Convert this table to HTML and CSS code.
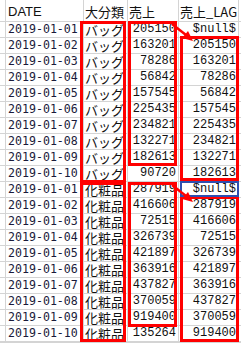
FILE: index.html
```html
<!DOCTYPE html>
<html>
<head>
<meta charset="utf-8">
<link rel="stylesheet" href="styles.css">
</head>
<body>
<div class="sheet">
  <div class="grid">
    <div class="c"></div><div class="c hd">DATE</div><div class="c hd jp">大分類</div><div class="c hd jp">売上</div><div class="c hd jp">売上_LAG</div><div class="c"></div>

    <div class="c"></div><div class="c dt">2019-01-01</div><div class="c cat">バッグ</div><div class="c num">205150</div><div class="c num">$null$</div><div class="c"></div>
    <div class="c"></div><div class="c dt">2019-01-02</div><div class="c cat">バッグ</div><div class="c num">163201</div><div class="c num">205150</div><div class="c"></div>
    <div class="c"></div><div class="c dt">2019-01-03</div><div class="c cat">バッグ</div><div class="c num">78286</div><div class="c num">163201</div><div class="c"></div>
    <div class="c"></div><div class="c dt">2019-01-04</div><div class="c cat">バッグ</div><div class="c num">56842</div><div class="c num">78286</div><div class="c"></div>
    <div class="c"></div><div class="c dt">2019-01-05</div><div class="c cat">バッグ</div><div class="c num">157545</div><div class="c num">56842</div><div class="c"></div>
    <div class="c"></div><div class="c dt">2019-01-06</div><div class="c cat">バッグ</div><div class="c num">225435</div><div class="c num">157545</div><div class="c"></div>
    <div class="c"></div><div class="c dt">2019-01-07</div><div class="c cat">バッグ</div><div class="c num">234821</div><div class="c num">225435</div><div class="c"></div>
    <div class="c"></div><div class="c dt">2019-01-08</div><div class="c cat">バッグ</div><div class="c num">132271</div><div class="c num">234821</div><div class="c"></div>
    <div class="c"></div><div class="c dt">2019-01-09</div><div class="c cat">バッグ</div><div class="c num">182613</div><div class="c num">132271</div><div class="c"></div>
    <div class="c"></div><div class="c dt">2019-01-10</div><div class="c cat">バッグ</div><div class="c num">90720</div><div class="c num">182613</div><div class="c"></div>

    <div class="c"></div><div class="c dt">2019-01-01</div><div class="c cat">化粧品</div><div class="c num">287919</div><div class="c num">$null$</div><div class="c"></div>
    <div class="c"></div><div class="c dt">2019-01-02</div><div class="c cat">化粧品</div><div class="c num">416606</div><div class="c num">287919</div><div class="c"></div>
    <div class="c"></div><div class="c dt">2019-01-03</div><div class="c cat">化粧品</div><div class="c num">72515</div><div class="c num">416606</div><div class="c"></div>
    <div class="c"></div><div class="c dt">2019-01-04</div><div class="c cat">化粧品</div><div class="c num">326739</div><div class="c num">72515</div><div class="c"></div>
    <div class="c"></div><div class="c dt">2019-01-05</div><div class="c cat">化粧品</div><div class="c num">421897</div><div class="c num">326739</div><div class="c"></div>
    <div class="c"></div><div class="c dt">2019-01-06</div><div class="c cat">化粧品</div><div class="c num">363916</div><div class="c num">421897</div><div class="c"></div>
    <div class="c"></div><div class="c dt">2019-01-07</div><div class="c cat">化粧品</div><div class="c num">437827</div><div class="c num">363916</div><div class="c"></div>
    <div class="c"></div><div class="c dt">2019-01-08</div><div class="c cat">化粧品</div><div class="c num">370059</div><div class="c num">437827</div><div class="c"></div>
    <div class="c"></div><div class="c dt">2019-01-09</div><div class="c cat">化粧品</div><div class="c num">919400</div><div class="c num">370059</div><div class="c"></div>
    <div class="c"></div><div class="c dt">2019-01-10</div><div class="c cat">化粧品</div><div class="c num">135264</div><div class="c num">919400</div><div class="c"></div>
  </div>

  <div class="box a1"></div>
  <div class="box b1"></div>
  <div class="box c1"></div>
  <div class="box a2"></div>
  <div class="box b2"></div>
  <div class="box c2"></div>
  <div class="sel"></div>

  <svg class="arrows" width="241" height="343" viewBox="0 0 241 343">
    <line x1="172" y1="24" x2="186" y2="35" stroke="#f00" stroke-width="2.5"/>
    <polygon points="193,41 182,38 188,31" fill="#f00"/>
    <line x1="172" y1="185" x2="186" y2="196" stroke="#f00" stroke-width="2.5"/>
    <polygon points="193,202 182,199 188,192" fill="#f00"/>
  </svg>
</div>
</body>
</html>
```

FILE: styles.css
```css
html, body {
  margin: 0;
  padding: 0;
  background: #fff;
}

.sheet {
  position: relative;
  width: 241px;
  height: 343px;
  overflow: hidden;
}

.grid {
  display: grid;
  grid-template-columns: 5px 77px 43px 50px 59px 1fr;
  grid-template-rows: 21px repeat(20, 15px) 1fr;
  gap: 1px;
  background: #d4d4d4;
  height: 343px;
}

.c {
  background: #fff;
  white-space: nowrap;
  color: #111;
  line-height: 15px;
  min-width: 0;
}

.hd {
  font-family: "Liberation Sans", Arial, sans-serif;
  font-size: 13px;
  line-height: 21px;
  padding-left: 2px;
  padding-top: 1px;
}

.jp {
  font-family: "Noto Sans CJK JP", sans-serif;
  font-size: 13px;
  padding-left: 1px;
}

.dt {
  font-family: "DejaVu Sans Mono", monospace;
  font-size: 11.6px;
  padding-left: 2px;
  color: #1a1a3a;
}

.cat {
  font-family: "Noto Sans CJK JP", sans-serif;
  font-size: 13px;
  line-height: 15px;
  padding-left: 1px;
}

.num {
  font-family: "Liberation Mono", "Courier New", monospace;
  font-size: 12px;
  text-align: right;
  padding-right: 2px;
}

.box {
  position: absolute;
  border: 3px solid #f00;
  box-sizing: border-box;
}

.a1 { left: 80px; top: 21px; width: 46px; height: 162px; }
.b1 { left: 128px; top: 21px; width: 49px; height: 145px; }
.c1 { left: 180px; top: 36px; width: 59px; height: 145px; }
.a2 { left: 80px; top: 182px; width: 46px; height: 160px; }
.b2 { left: 128px; top: 182px; width: 49px; height: 145px; }
.c2 { left: 180px; top: 196px; width: 59px; height: 146px; }

.sel {
  position: absolute;
  left: 180px;
  top: 181px;
  width: 59px;
  height: 16px;
  border: 2px solid #2f4fb0;
  box-sizing: border-box;
}

.arrows {
  position: absolute;
  left: 0;
  top: 0;
  pointer-events: none;
}
```
